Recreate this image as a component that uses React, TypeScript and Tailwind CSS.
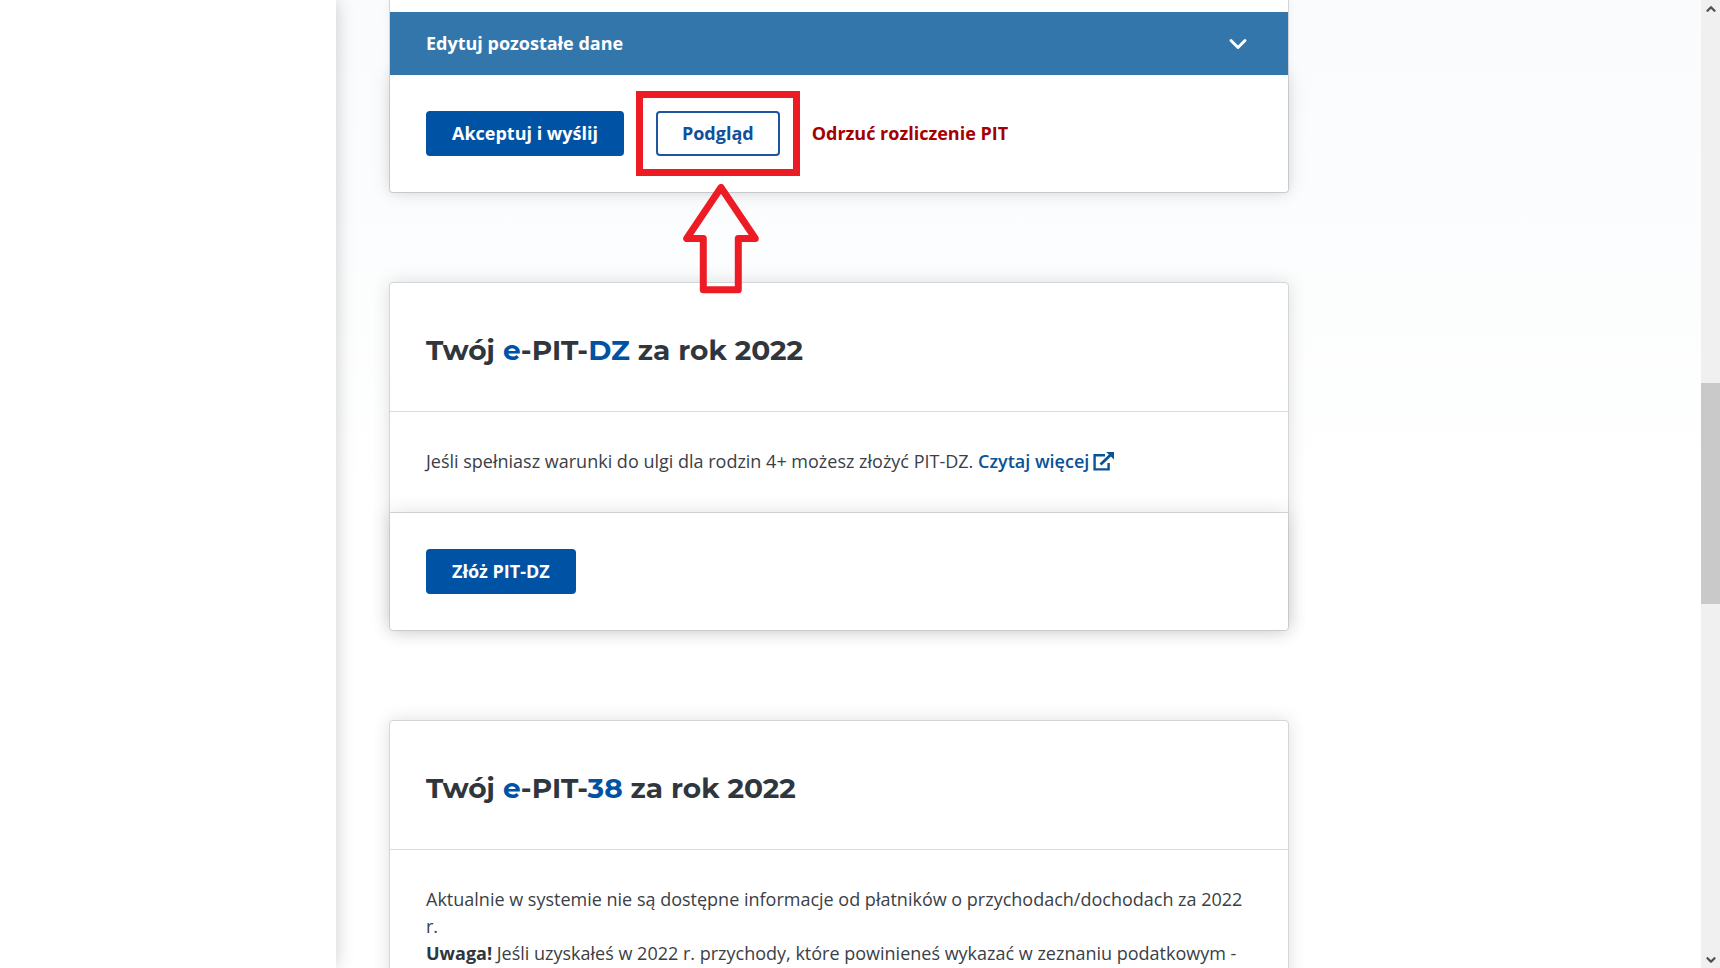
import React from 'react';
import { ChevronDown, ChevronUp } from 'lucide-react';

interface CardTitleProps {
  form: string;
}

const CardTitle: React.FC<CardTitleProps> = ({ form }) => (
  <header className="px-9 pt-[49px] pb-[43px]">
    <h2 className="text-[28px] leading-9 font-bold font-[Montserrat,Inter,sans-serif] text-[#2f363d]">
      Twój <span className="text-[#0052a5]">e</span>-PIT-<span className="text-[#0052a5]">{form}</span> za rok 2022
    </h2>
  </header>
);

const Card: React.FC<{ children: React.ReactNode }> = ({ children }) => (
  <section className="bg-white border border-[#d3d5d8] rounded-[4px] shadow-[0_0_18px_rgba(0,0,0,0.13)]">
    {children}
  </section>
);

const CardFooter: React.FC<{ children: React.ReactNode }> = ({ children }) => (
  <footer className="flex items-center gap-8 p-9 bg-white rounded-b-[4px] shadow-[0_0_20px_rgba(0,0,0,0.13)]">
    {children}
  </footer>
);

const PrimaryButton: React.FC<{ label: string }> = ({ label }) => (
  <button className="h-[45px] px-[26px] rounded-[4px] bg-[#0052a5] text-white font-bold whitespace-nowrap">
    {label}
  </button>
);

const ExternalIcon = () => (
  <svg viewBox="0 0 21 19" className="inline-block w-[21px] h-[19px] ml-1 -mt-1 align-middle" fill="none" stroke="currentColor" strokeWidth="2.4">
    <path d="M12 3.2H1.6V17.4H15.6V11" />
    <path d="M7.5 12.6L18 2.6" strokeWidth="2.8" />
    <path d="M13.2 0H21V7.4Z" fill="currentColor" stroke="none" />
  </svg>
);

const Scrollbar = () => (
  <div className="flex flex-col flex-none w-[19px] bg-[#f0f0f0] text-[#505050]">
    <div className="flex items-center justify-center h-[17px]">
      <ChevronUp size={14} strokeWidth={4} />
    </div>
    <div className="flex-[366]" />
    <div className="flex-[221] bg-[#c9c9c9]" />
    <div className="flex-[347]" />
    <div className="flex items-center justify-center h-[17px]">
      <ChevronDown size={14} strokeWidth={4} />
    </div>
  </div>
);

export default function App() {
  return (
    <div className="flex h-screen overflow-hidden bg-white text-[18px] leading-[27px] text-[#3a4046] font-['Open_Sans','Noto_Sans',sans-serif]">
      {/* Side menu column */}
      <aside className="relative z-10 flex-none w-84 bg-white shadow-[0_0_18px_rgba(0,0,0,0.2)]" />

      <main className="flex-1 min-w-0 px-[53px] overflow-hidden bg-linear-to-b from-[#fafbfd] via-[#fcfdfd] via-30% to-white to-50%">
        <div className="flex flex-col gap-[89px] w-full max-w-[900px]">
          <section className="bg-white border border-t-0 border-[#d3d5d8] rounded-b-[4px] shadow-[0_0_10px_rgba(0,0,0,0.06)]">
            <button className="relative flex items-center justify-between w-full h-[63px] mt-3 px-9 bg-[#3276ac] text-white font-bold">
              Edytuj pozostałe dane
              <ChevronDown size={28} strokeWidth={2.5} />
            </button>
            <CardFooter>
              <PrimaryButton label="Akceptuj i wyślij" />
              <div className="relative">
                <button className="h-[45px] px-6 rounded-[4px] border-2 border-[#1c56a0] bg-white text-[#0f509c] font-bold">
                  Podgląd
                </button>
                {/* Highlight frame and arrow */}
                <div className="absolute -inset-5 border-[7px] border-[#ed1c24] pointer-events-none" />
                <svg
                  viewBox="0 0 76 110"
                  className="absolute z-10 top-[73px] left-[27px] w-[76px] h-[110px] pointer-events-none"
                  fill="none"
                  stroke="#ed1c24"
                  strokeWidth="7"
                  strokeLinejoin="round"
                >
                  <path d="M38 3.5L3.7 54.5H20.3V105.8H55.3V54.5H72.3Z" />
                </svg>
              </div>
              <button className="text-[#a40000] font-bold">Odrzuć rozliczenie PIT</button>
            </CardFooter>
          </section>

          <Card>
            <CardTitle form="DZ" />
            <div className="px-9 pt-9 pb-[37px] border-y border-[#d9dbde]">
              <p>
                Jeśli spełniasz warunki do ulgi dla rodzin 4+ możesz złożyć PIT-DZ.{' '}
                <a href="#pit-dz" className="font-semibold text-[#0a5296] whitespace-nowrap">
                  Czytaj więcej
                  <ExternalIcon />
                </a>
              </p>
            </div>
            <CardFooter>
              <PrimaryButton label="Złóż PIT-DZ" />
            </CardFooter>
          </Card>

          <Card>
            <CardTitle form="38" />
            <div className="p-9 border-t border-[#d9dbde]">
              <p>Aktualnie w systemie nie są dostępne informacje od płatników o przychodach/dochodach za 2022 r.</p>
              <p>
                <strong className="font-bold text-[#2f363d]">Uwaga!</strong> Jeśli uzyskałeś w 2022 r. przychody, które powinieneś wykazać w zeznaniu podatkowym -
              </p>
            </div>
          </Card>
        </div>
      </main>

      <Scrollbar />
    </div>
  );
}
